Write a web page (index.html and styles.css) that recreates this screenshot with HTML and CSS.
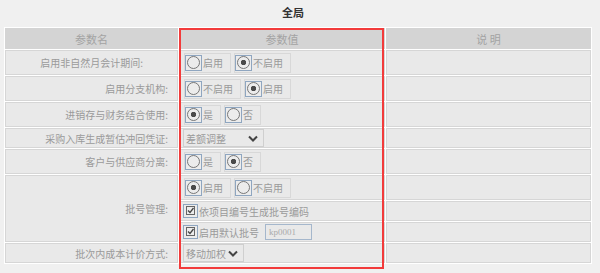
FILE: index.html
```html
<!doctype html>
<html>
	<head>
		<meta charset="utf-8" />
		<title>全局参数</title>
		<link rel="stylesheet" href="styles.css">
	</head>
	<body>
		<div class="page">
			<h1 class="title">全局</h1>

			<table class="params">
				<colgroup>
					<col class="col-name" />
					<col class="col-value" />
					<col class="col-note" />
				</colgroup>
				<thead>
					<tr class="row-head">
						<th>参数名</th>
						<th>参数值</th>
						<th>说 明</th>
					</tr>
				</thead>
				<tbody>
					<tr class="row-tall">
						<td class="name name-short">启用非自然月会计期间:</td>
						<td class="value">
							<span class="choice"><span class="radio"></span>启用</span>
							<span class="choice"><span class="radio on"></span>不启用</span>
						</td>
						<td></td>
					</tr>
					<tr class="row-tall">
						<td class="name">启用分支机构:</td>
						<td class="value">
							<span class="choice"><span class="radio"></span>不启用</span>
							<span class="choice"><span class="radio on"></span>启用</span>
						</td>
						<td></td>
					</tr>
					<tr class="row-tall">
						<td class="name">进销存与财务结合使用:</td>
						<td class="value">
							<span class="choice"><span class="radio on"></span>是</span>
							<span class="choice"><span class="radio"></span>否</span>
						</td>
						<td></td>
					</tr>
					<tr class="row-low">
						<td class="name">采购入库生成暂估冲回凭证:</td>
						<td class="value">
							<span class="select select-wide">
								<span>差额调整</span>
								<svg width="10" height="7" viewBox="0 0 10 7"><path d="M1 1.5 L5 5.5 L9 1.5" fill="none" stroke="#444" stroke-width="2"/></svg>
							</span>
						</td>
						<td></td>
					</tr>
					<tr class="row-tall">
						<td class="name">客户与供应商分离:</td>
						<td class="value">
							<span class="choice"><span class="radio"></span>是</span>
							<span class="choice"><span class="radio on"></span>否</span>
						</td>
						<td></td>
					</tr>
					<tr class="row-tall">
						<td class="name" rowspan="3">批号管理:</td>
						<td class="value">
							<span class="choice"><span class="radio on"></span>启用</span>
							<span class="choice"><span class="radio"></span>不启用</span>
						</td>
						<td></td>
					</tr>
					<tr class="row-low">
						<td class="value">
							<span class="check">
								<svg width="15" height="14" viewBox="0 0 15 14"><rect x="0.5" y="0.5" width="14" height="13" fill="#ececec" stroke="#8fa6c0"/><rect x="3.5" y="2.5" width="8" height="8" fill="none" stroke="#666"/><path d="M5 6.5 L7 8.5 L10.5 4" fill="none" stroke="#444" stroke-width="1.3"/></svg>依项目编号生成批号编码
							</span>
						</td>
						<td></td>
					</tr>
					<tr class="row-low">
						<td class="value">
							<span class="check">
								<svg width="15" height="14" viewBox="0 0 15 14"><rect x="0.5" y="0.5" width="14" height="13" fill="#ececec" stroke="#8fa6c0"/><rect x="3.5" y="2.5" width="8" height="8" fill="none" stroke="#666"/><path d="M5 6.5 L7 8.5 L10.5 4" fill="none" stroke="#444" stroke-width="1.3"/></svg>启用默认批号
							</span>
							<input class="code" type="text" value="kp0001" />
						</td>
						<td></td>
					</tr>
					<tr class="row-low">
						<td class="name">批次内成本计价方式:</td>
						<td class="value">
							<span class="select">
								<span>移动加权</span>
								<svg width="10" height="7" viewBox="0 0 10 7"><path d="M1 1.5 L5 5.5 L9 1.5" fill="none" stroke="#444" stroke-width="2"/></svg>
							</span>
						</td>
						<td></td>
					</tr>
				</tbody>
			</table>

			<div class="mark"></div>
		</div>
	</body>
</html>
```

FILE: styles.css
```css
* {
	box-sizing: border-box;
}

html {
	--font-main: "Noto Sans CJK SC", "Noto Sans", sans-serif;
	--color-bg: #f0f0f0;
	--color-cell: #e9e9e9;
	--color-head: #d4d4d4;
	--color-line: #d6d6d6;
	--color-text: #9a9a9a;
	--color-control: #8fa6c0;
	--color-mark: #f23b3b;
}

body {
	margin: 0;
	background: var(--color-bg);
	font-family: var(--font-main);
	font-size: 10px;
	color: var(--color-text);
}

.page {
	position: relative;
	width: 600px;
	height: 273px;
}

.title {
	margin: 0;
	height: 27px;
	padding-right: 14px;
	font-size: 11px;
	font-weight: bold;
	line-height: 25px;
	text-align: center;
	color: #333;
}

.params {
	margin-left: 4px;
	width: 588px;
	table-layout: fixed;
	border-collapse: separate;
	border-spacing: 1px;
	background: #fff;
}

.col-name {
	width: 173px;
}

.col-value {
	width: 206px;
}

.col-note {
	width: 205px;
}

.row-head {
	height: 21px;
}

.row-tall {
	height: 25px;
}

.row-low {
	height: 20px;
}

th {
	padding: 0;
	background: var(--color-head);
	border: 1px solid var(--color-head);
	font-size: 11px;
	font-weight: normal;
	color: #a3a3a3;
}

td {
	padding: 0;
	background: var(--color-cell);
	border: 1px solid var(--color-line);
	vertical-align: middle;
	white-space: nowrap;
}

td.name {
	padding-right: 9px;
	text-align: right;
}

td.name-short {
	padding-right: 34px;
}

td.value {
	padding-left: 3px;
	font-size: 0;
}

.choice {
	display: inline-flex;
	align-items: center;
	height: 20px;
	margin-left: 1px;
	margin-right: 2px;
	padding-right: 7px;
	border: 1px solid #d8d8d8;
	font-size: 10px;
	vertical-align: middle;
}

.radio {
	display: inline-flex;
	flex-shrink: 0;
	align-items: center;
	justify-content: center;
	width: 17px;
	height: 16px;
	margin-right: 1px;
	border: 1px solid var(--color-control);
	background: #ececec;
}

.radio::before {
	content: '';
	width: 11px;
	height: 11px;
	border: 1px solid #777;
	border-radius: 50%;
}

.radio.on::before {
	background: radial-gradient(circle, #4a4a4a 0 2.4px, transparent 3px);
}

.check {
	display: inline-flex;
	align-items: center;
	font-size: 10px;
	vertical-align: middle;
}

.check svg {
	display: block;
	flex-shrink: 0;
	margin-right: 1px;
}

.code {
	width: 47px;
	height: 16px;
	margin-left: 6px;
	padding: 0 0 0 3px;
	border: 1px solid #a5b7cc;
	background: var(--color-cell);
	font-family: "Liberation Serif", serif;
	font-size: 9px;
	color: #aaa;
	vertical-align: middle;
}

.select {
	display: inline-flex;
	align-items: center;
	justify-content: space-between;
	width: 61px;
	height: 18px;
	padding: 0 5px 0 2px;
	border: 1px solid #cfcfcf;
	font-size: 10px;
	vertical-align: middle;
}

.select-wide {
	width: 81px;
}

.mark {
	position: absolute;
	left: 179px;
	top: 28px;
	width: 205px;
	height: 241px;
	border: 2px solid var(--color-mark);
	pointer-events: none;
}
```
